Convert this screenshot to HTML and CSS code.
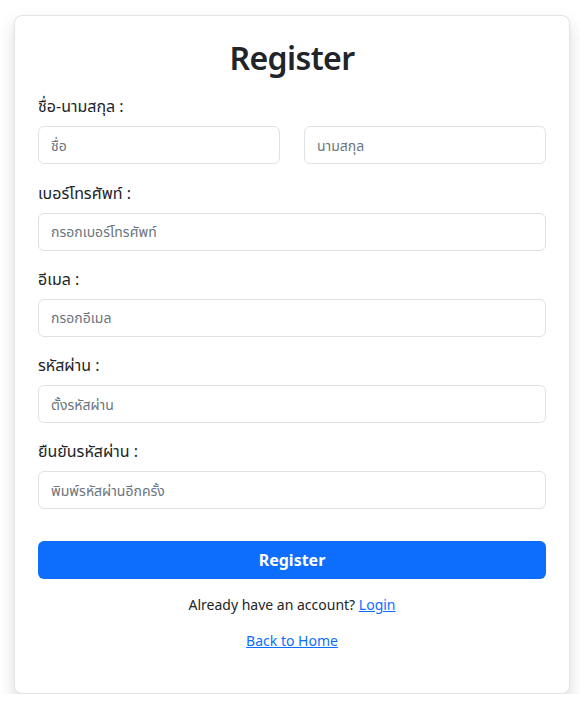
FILE: index.html
```html
<!DOCTYPE html>
<html lang="th">
<head>
<meta charset="utf-8">
<title>Register</title>
<link rel="stylesheet" href="styles.css">
</head>
<body>
<div class="card">
  <h2 class="title">Register</h2>
  <div class="group">
    <label class="label">ชื่อ-นามสกุล :</label>
    <div class="row">
      <input class="input" type="text" placeholder="ชื่อ">
      <input class="input" type="text" placeholder="นามสกุล">
    </div>
  </div>
  <div class="group">
    <label class="label">เบอร์โทรศัพท์ :</label>
    <input class="input" type="text" placeholder="กรอกเบอร์โทรศัพท์">
  </div>
  <div class="group">
    <label class="label">อีเมล :</label>
    <input class="input" type="text" placeholder="กรอกอีเมล">
  </div>
  <div class="group">
    <label class="label">รหัสผ่าน :</label>
    <input class="input" type="password" placeholder="ตั้งรหัสผ่าน">
  </div>
  <div class="group">
    <label class="label">ยืนยันรหัสผ่าน :</label>
    <input class="input" type="password" placeholder="พิมพ์รหัสผ่านอีกครั้ง">
  </div>
  <button class="btn" type="button">Register</button>
  <p class="note">Already have an account? <a href="#">Login</a></p>
  <p class="home"><a href="#">Back to Home</a></p>
</div>
</body>
</html>
```
FILE: styles.css
```css
* { box-sizing: border-box; }
body {
  margin: 0;
  padding: 15px 10px 0 14px;
  background: #fff;
  font-family: "Noto Sans", "Noto Sans Thai", "DejaVu Sans", sans-serif;
  color: #212529;
  font-size: 16px;
  line-height: 1.5;
}
.card {
  width: 556px;
  border: 1px solid #e3e3e6;
  border-radius: 8px;
  padding: 23px 23px 24px;
  background: #fff;
  box-shadow: 0 8px 16px rgba(0,0,0,0.15);
}
.title {
  margin: 0 0 17px;
  text-align: center;
  font-size: 32px;
  font-weight: 600;
  line-height: 1.2;
  letter-spacing: -0.6px;
}
.group { margin-bottom: 16.25px; }
.label {
  display: block;
  margin-bottom: 8px;
}
.row {
  display: flex;
  gap: 24px;
}
.input {
  display: block;
  width: 100%;
  height: 38px;
  padding: 6px 12px;
  border: 1px solid #dee2e6;
  border-radius: 6px;
  font-family: inherit;
  font-size: 14px;
  color: #212529;
  background: #fff;
}
.input::placeholder { color: #6c757d; }
.btn {
  display: block;
  width: 100%;
  height: 38px;
  margin-top: 32px;
  border: none;
  border-radius: 6px;
  background: #0d6efd;
  color: #fff;
  font-family: inherit;
  font-size: 16px;
  font-weight: 700;
}
.note {
  margin: 14px 0 12px;
  text-align: center;
  font-size: 14px;
  line-height: 24px;
}
.home {
  margin: 0 0 16px;
  text-align: center;
  font-size: 14px;
  line-height: 24px;
}
a { color: #0d6efd; }
```
